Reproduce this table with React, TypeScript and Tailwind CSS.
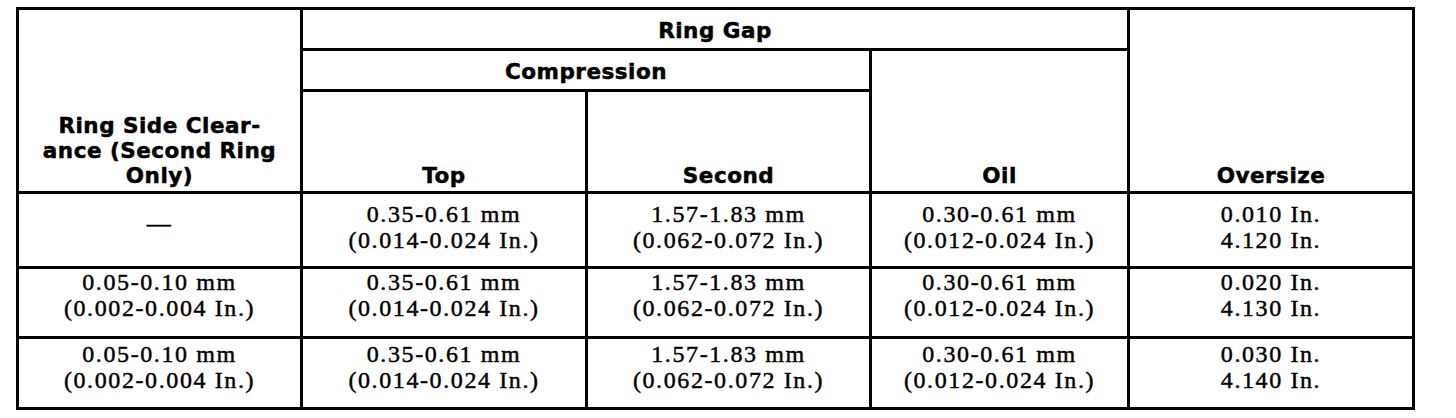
import React from 'react';

const head =
  "font-['DejaVu_Sans',sans-serif] font-bold text-[21.5px] leading-[25px] tracking-[0.5px] text-black [-webkit-text-stroke:0.5px_black]";
const body =
  "font-['Liberation_Serif',serif] text-[24px] leading-[26.6px] tracking-[1.6px] text-black [-webkit-text-stroke:0.45px_black]";
const line = 'border-black border-r-[3px] border-b-[3px]';

const rows = [
  {
    side: null,
    pad: 'pb-[12px]',
    top: ['0.35-0.61 mm', '(0.014-0.024 In.)'],
    second: ['1.57-1.83 mm', '(0.062-0.072 In.)'],
    oil: ['0.30-0.61 mm', '(0.012-0.024 In.)'],
    oversize: ['0.010 In.', '4.120 In.'],
  },
  {
    side: ['0.05-0.10 mm', '(0.002-0.004 In.)'],
    pad: 'pb-[14px]',
    top: ['0.35-0.61 mm', '(0.014-0.024 In.)'],
    second: ['1.57-1.83 mm', '(0.062-0.072 In.)'],
    oil: ['0.30-0.61 mm', '(0.012-0.024 In.)'],
    oversize: ['0.020 In.', '4.130 In.'],
  },
  {
    side: ['0.05-0.10 mm', '(0.002-0.004 In.)'],
    pad: 'pb-[13px]',
    top: ['0.35-0.61 mm', '(0.014-0.024 In.)'],
    second: ['1.57-1.83 mm', '(0.062-0.072 In.)'],
    oil: ['0.30-0.61 mm', '(0.012-0.024 In.)'],
    oversize: ['0.030 In.', '4.140 In.'],
  },
];

function Cell({ lines, className }: { lines: string[]; className: string }) {
  return (
    <div className={`flex flex-col items-center justify-end text-center ${body} ${className}`}>
      {lines.map((l) => (
        <span key={l} className="whitespace-nowrap">
          {l}
        </span>
      ))}
    </div>
  );
}

export default function App() {
  return (
    <div className="min-h-screen bg-white pl-[16px] pt-[7px]">
      <div className="grid w-fit grid-cols-[284px_285px_284px_258px_282px] grid-rows-[41px_41px_102px_75px_70px_68px] border-[3px] border-black">
        {/* header */}
        <div className={`row-span-3 flex flex-col items-center justify-end pb-[3px] text-center ${head} ${line}`}>
          <span>Ring Side Clear-</span>
          <span>ance (Second Ring</span>
          <span>Only)</span>
        </div>
        <div className={`col-span-3 flex items-end justify-center pb-[5px] ${head} ${line}`}>Ring Gap</div>
        <div className={`row-span-3 flex items-end justify-center pb-[3px] ${head} border-b-[3px] border-black`}>
          Oversize
        </div>
        <div className={`col-span-2 flex items-end justify-center pb-[5px] ${head} ${line}`}>Compression</div>
        <div className={`row-span-2 flex items-end justify-center pb-[3px] ${head} ${line}`}>Oil</div>
        <div className={`flex items-end justify-center pb-[3px] ${head} ${line}`}>Top</div>
        <div className={`flex items-end justify-center pb-[3px] ${head} ${line}`}>Second</div>

        {/* data */}
        {rows.map((r, i) => {
          const last = i === rows.length - 1;
          const bb = last ? 'border-r-[3px] border-black' : line;
          return (
            <React.Fragment key={i}>
              {r.side ? (
                <Cell lines={r.side} className={`${r.pad} ${bb}`} />
              ) : (
                <div className={`flex items-end justify-center pb-[29px] ${body} ${bb}`}>—</div>
              )}
              <Cell lines={r.top} className={`${r.pad} ${bb}`} />
              <Cell lines={r.second} className={`${r.pad} ${bb}`} />
              <Cell lines={r.oil} className={`${r.pad} ${bb}`} />
              <Cell lines={r.oversize} className={`${r.pad} ${last ? '' : 'border-b-[3px] border-black'}`} />
            </React.Fragment>
          );
        })}
      </div>
    </div>
  );
}
